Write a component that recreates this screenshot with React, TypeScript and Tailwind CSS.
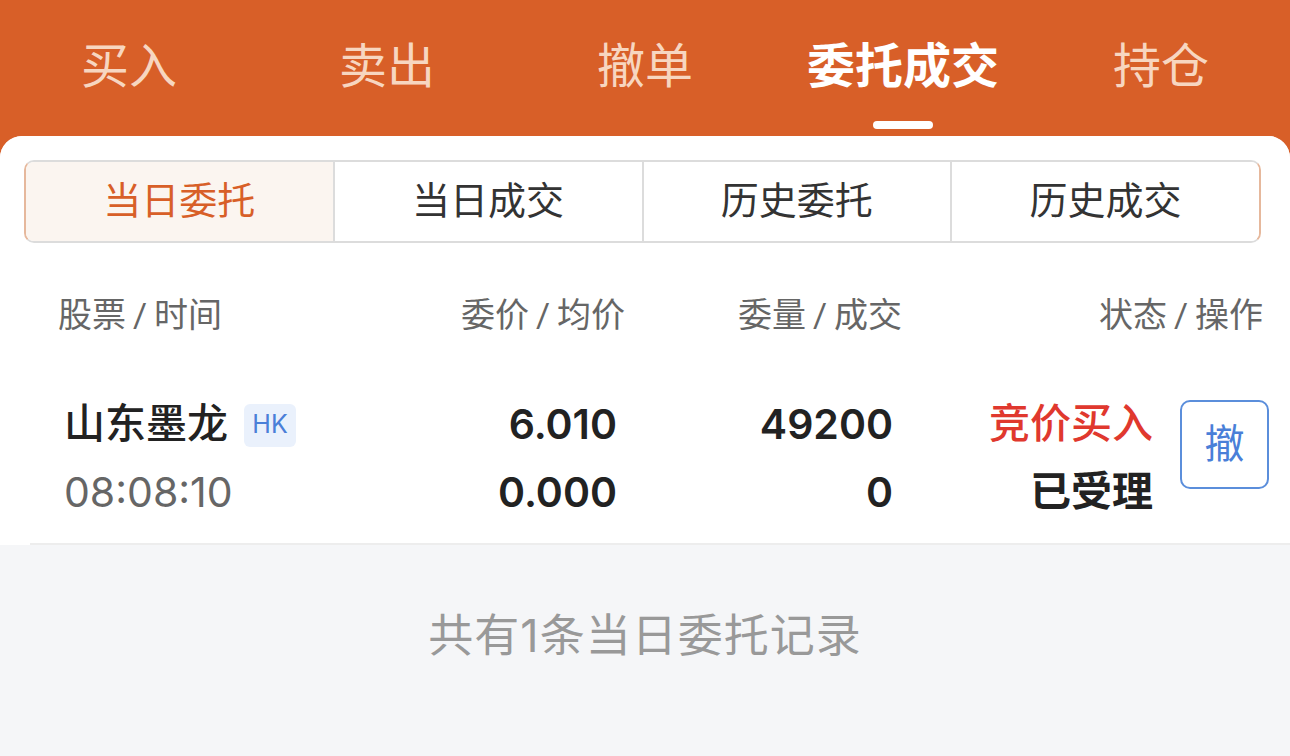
import React from 'react';

const FONT = { fontFamily: 'Roboto, "Noto Sans CJK SC", sans-serif' };
const NUM = { fontFamily: 'Inter, "Noto Sans CJK SC", sans-serif' };

const topTabs = ['买入', '卖出', '撤单', '委托成交', '持仓'];
const segTabs = ['当日委托', '当日成交', '历史委托', '历史成交'];

// header label with the wide slash seen in the design
function Pair({ a, b }: { a: string; b: string }) {
  return (
    <span>
      {a}
      <span className="mx-[7px]">/</span>
      {b}
    </span>
  );
}

export default function App() {
  const activeTop = 3;
  const activeSeg = 0;

  return (
    <div className="w-[1290px] h-[756px] bg-[#D85F28] flex flex-col overflow-hidden" style={FONT}>
      {/* top tabs */}
      <div className="h-[136px] shrink-0 grid grid-cols-5">
        {topTabs.map((t, i) => (
          <div key={t} className="relative flex items-center justify-center pb-[2px]">
            <span
              className={
                i === activeTop
                  ? 'text-[48px] leading-none font-semibold text-white'
                  : 'text-[48px] leading-none text-[#F7D6C0]'
              }
            >
              {t}
            </span>
            {i === activeTop && (
              <div className="absolute left-1/2 -translate-x-1/2 top-[121px] w-[60px] h-[8px] rounded-full bg-white" />
            )}
          </div>
        ))}
      </div>

      {/* card */}
      <div className="flex-1 bg-[#F5F6F8] rounded-t-[22px] overflow-hidden flex flex-col">
        <div className="bg-white pt-[24px]">
          {/* segmented control */}
          <div className="mx-[24px] w-[1237px] h-[83px] flex border-y-2 border-[#DCDCDC] border-x-2 border-x-[#E6B89C] rounded-[10px] overflow-hidden">
            {segTabs.map((t, i) => (
              <div
                key={t}
                className={
                  (i > 0 ? 'border-l-2 border-[#DCDCDC] ' : '') +
                  (i === activeSeg ? 'bg-[#FBF5F0] text-[#D85F28] ' : 'bg-white text-[#333333] ') +
                  'flex-1 flex items-center justify-center text-[38px]'
                }
              >
                {t}
              </div>
            ))}
          </div>

          {/* column headers */}
          <div className="mt-[42px] h-[60px] pl-[58px] grid grid-cols-[342px_225px_277px_361px] items-center text-[34px] text-[#666666]">
            <div><Pair a="股票" b="时间" /></div>
            <div className="text-right"><Pair a="委价" b="均价" /></div>
            <div className="text-right"><Pair a="委量" b="成交" /></div>
            <div className="text-right"><Pair a="状态" b="操作" /></div>
          </div>

          {/* order row */}
          <div className="mt-[46px] ml-[30px] pb-[16px] border-b-2 border-[#EDEDED]">
            <div className="pl-[34px] flex items-center">
              <div className="w-[336px] flex flex-col">
                <div className="h-[68px] flex items-center gap-[16px]">
                  <span className="text-[41px] font-medium text-[#222222]">山东墨龙</span>
                  <span className="h-[43px] w-[52px] rounded-[6px] bg-[#EAF1FC] text-[#4A7FD8] text-[25px] flex items-center justify-center" style={NUM}>HK</span>
                </div>
                <div className="h-[68px] flex items-center text-[41px] text-[#666666]" style={NUM}>08:08:10</div>
              </div>
              <div className="w-[217px] flex flex-col items-end text-[41px] font-semibold text-[#222222]" style={NUM}>
                <div className="h-[68px] flex items-center">6.010</div>
                <div className="h-[68px] flex items-center">0.000</div>
              </div>
              <div className="w-[276px] flex flex-col items-end text-[41px] font-semibold text-[#222222]" style={NUM}>
                <div className="h-[68px] flex items-center">49200</div>
                <div className="h-[68px] flex items-center">0</div>
              </div>
              <div className="w-[260px] flex flex-col items-end text-[41px]">
                <div className="h-[68px] flex items-center font-medium text-[#E0382E]">竞价买入</div>
                <div className="h-[68px] flex items-center font-semibold text-[#222222]">已受理</div>
              </div>
              <button className="ml-[27px] self-start mt-[9px] w-[89px] h-[89px] rounded-[10px] border-2 border-[#5B8EDB] text-[#4A7FD8] text-[40px] flex items-center justify-center bg-white">
                撤
              </button>
            </div>
          </div>
        </div>

        {/* footer */}
        <div className="pt-[68px] text-center text-[45px] tracking-[1px] leading-[46px] text-[#999999]">
          共有<span style={NUM}>1</span>条当日委托记录
        </div>
      </div>
    </div>
  );
}
